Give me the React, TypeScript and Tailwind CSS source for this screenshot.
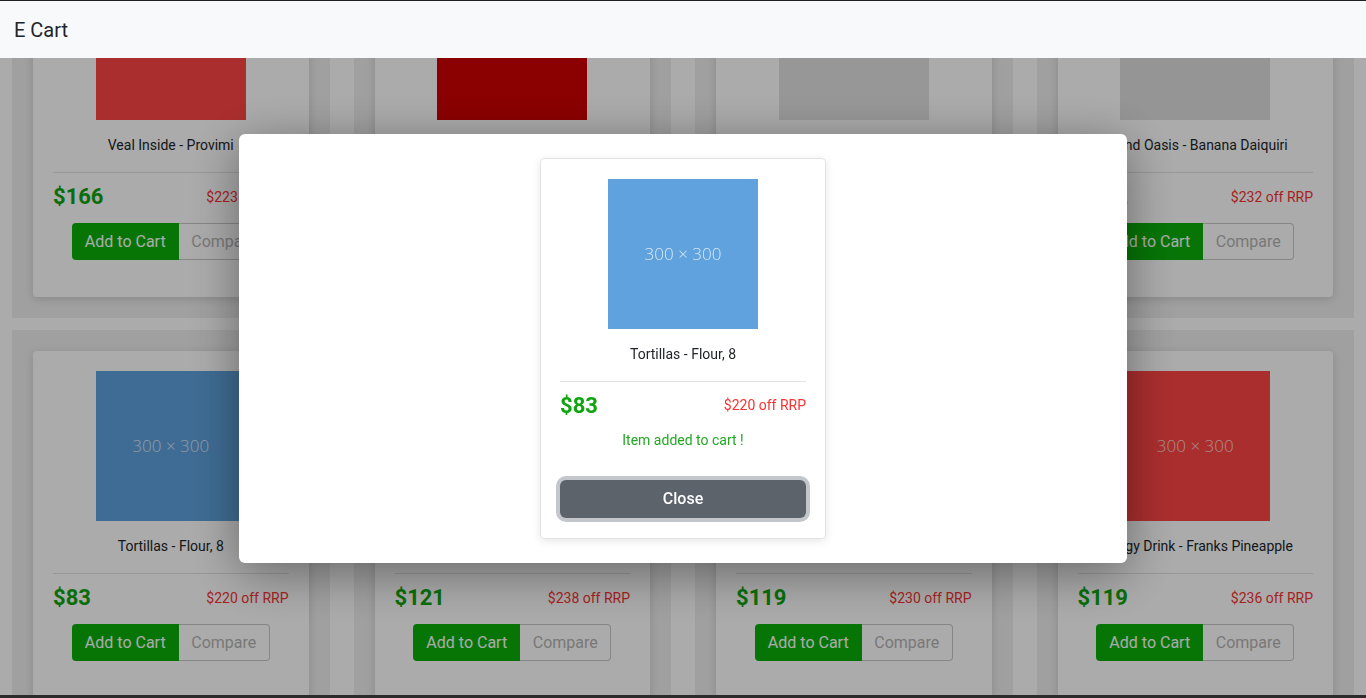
import { useState } from 'react'

type Product = {
  title: string
  price: number
  off: number
  img: string
}

const products: Product[] = [
  { title: 'Veal Inside - Provimi', price: 166, off: 223, img: 'bg-[#ff4545]' },
  { title: 'Beef - Tenderloin Tails', price: 131, off: 214, img: 'bg-[#cf0000]' },
  { title: 'Wine - Red, Cabernet', price: 97, off: 205, img: 'bg-[#e2e2e2]' },
  { title: 'Island Oasis - Banana Daiquiri', price: 142, off: 232, img: 'bg-[#dedede]' },
  { title: 'Tortillas - Flour, 8', price: 83, off: 220, img: 'bg-[#5fa2dd]' },
  { title: 'Lamb - Whole Head Off', price: 121, off: 238, img: 'bg-[#ff4545]' },
  { title: 'Cheese - Brie, Triple Creme', price: 119, off: 230, img: 'bg-[#5fa2dd]' },
  { title: 'Energy Drink - Franks Pineapple', price: 119, off: 236, img: 'bg-[#ff4545]' },
]

function Placeholder({ img }: { img: string }) {
  return (
    <div className={`w-[150px] h-[150px] mx-auto flex items-center justify-center ${img}`}>
      <span className="font-['Open_Sans',sans-serif] font-light text-[17px] text-white/75">300 × 300</span>
    </div>
  )
}

function ProductCard({ product }: { product: Product }) {
  return (
    <div className="bg-[#efefef] p-[21px]">
      <div className="bg-white rounded-[4px] shadow-[0_2px_10px_rgba(0,0,0,0.15)] px-5 pt-5 pb-[37px] flex flex-col">
        <Placeholder img={product.img} />
        <div className="mt-[15px] text-center text-[14px] leading-[21px] text-[#212529] whitespace-nowrap">
          {product.title}
        </div>
        <hr className="mt-[16px] border-0 border-t border-[#e2e2e2]" />
        <div className="mt-[11px] flex items-center justify-between">
          <span className="text-[22px] leading-[26px] font-bold text-[#0ea50e]">${product.price}</span>
          <span className="text-[14px] text-[#f83232]">${product.off} off RRP</span>
        </div>
        <div className="mt-[13px] flex justify-center">
          <button className="w-[107px] h-[37px] rounded-l-[4px] bg-[#0aaf0a] text-white text-[16px]">Add to Cart</button>
          <button className="w-[91px] h-[37px] rounded-r-[4px] border border-l-0 border-[#c8c8c8] text-[#b4b4b4] text-[16px]">
            Compare
          </button>
        </div>
      </div>
    </div>
  )
}

function AddedModal({ product, onClose }: { product: Product; onClose: () => void }) {
  return (
    <div className="fixed inset-0 z-30 flex items-center justify-center">
      <div className="w-[888px] mb-[2px] bg-white rounded-[6px] py-6 shadow-[0_10px_50px_rgba(0,0,0,0.4)]">
        <div className="w-[286px] mx-auto border border-[#e3e3e3] rounded-[4px] shadow-[0_2px_8px_rgba(0,0,0,0.1)] px-[19px] pt-5 pb-[20px] flex flex-col">
          <Placeholder img={product.img} />
          <div className="mt-[15px] text-center text-[14px] leading-[21px] text-[#212529]">{product.title}</div>
          <hr className="mt-[16px] border-0 border-t border-[#e2e2e2]" />
          <div className="mt-[11px] flex items-center justify-between">
            <span className="text-[22px] leading-[26px] font-bold text-[#0ea50e]">${product.price}</span>
            <span className="text-[14px] text-[#f83232]">${product.off} off RRP</span>
          </div>
          <div className="mt-[11px] text-center text-[14px] leading-[21px] text-[#22a822]">Item added to cart !</div>
          <button
            type="button"
            onClick={onClose}
            className="mt-[29px] h-[38px] rounded-[6px] bg-[#5c636a] text-white text-[16px] font-medium ring-4 ring-[#c3c6ca]"
          >
            Close
          </button>
        </div>
      </div>
    </div>
  )
}

export default function App() {
  const [open, setOpen] = useState(true)

  return (
    <div className="h-[698px] bg-white font-['Roboto',sans-serif] overflow-hidden">
      <header className="fixed top-0 inset-x-0 z-40 h-[58px] bg-[#f8f9fa] border-t border-[#202124] flex items-center px-[14px]">
        <span className="text-[20px] text-[#212529]">E Cart</span>
      </header>

      <main className="-mt-[71px] px-3 grid grid-cols-4 gap-x-6 gap-y-3">
        {products.map((p) => (
          <ProductCard key={p.title} product={p} />
        ))}
      </main>

      {open && (
        <>
          <div className="fixed inset-0 z-20 bg-black/[0.33]" />
          <AddedModal product={products[4]} onClose={() => setOpen(false)} />
        </>
      )}

      <div className="fixed bottom-0 inset-x-0 z-50 h-[3px] bg-[#2b2b2b]" />
    </div>
  )
}
